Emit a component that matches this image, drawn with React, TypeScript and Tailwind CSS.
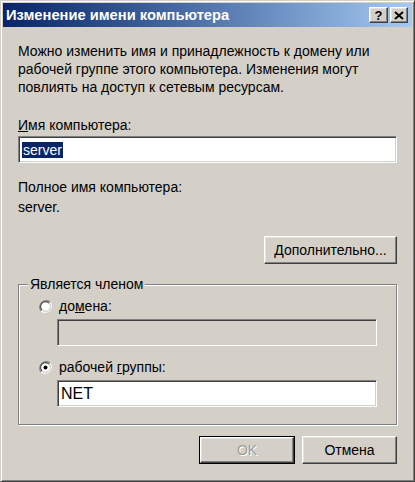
import React from 'react';

const font = { fontFamily: '"Liberation Sans", Arial, sans-serif' };

const Radio: React.FC<{ checked?: boolean }> = ({ checked }) => (
  <svg width="13" height="13" viewBox="0 0 12 12" className="shrink-0">
    <path d="M10.2 1.8 A6 6 0 0 0 1.8 10.2" fill="none" stroke="#808080" strokeWidth="1" />
    <path d="M1.8 10.2 A6 6 0 0 0 10.2 1.8" fill="none" stroke="#ffffff" strokeWidth="1" />
    <circle cx="6" cy="6" r="4.5" fill="#ffffff" />
    <path d="M9.2 2.8 A4.5 4.5 0 0 0 2.8 9.2" fill="none" stroke="#404040" strokeWidth="1" />
    <path d="M2.8 9.2 A4.5 4.5 0 0 0 9.2 2.8" fill="none" stroke="#d4d0c8" strokeWidth="1" />
    {checked && <circle cx="6" cy="6" r="1.8" fill="#000000" />}
  </svg>
);

const bevel =
  'border border-t-white border-l-white border-r-[#404040] border-b-[#404040] shadow-[inset_-1px_-1px_0_#808080,inset_1px_1px_0_#e4e2dc]';

const sunken =
  'border border-t-[#808080] border-l-[#808080] border-r-white border-b-white shadow-[inset_1px_1px_0_#404040,inset_-1px_-1px_0_#d4d0c8]';

export default function App() {
  return (
    <div
      style={font}
      className="w-[415px] h-[482px] bg-[#d4d0c8] text-black text-[14px] leading-[18px] border border-t-[#d4d0c8] border-l-[#d4d0c8] border-r-[#404040] border-b-[#404040] shadow-[inset_1px_1px_0_#ffffff,inset_-1px_-1px_0_#808080] p-[2px] flex flex-col overflow-hidden"
    >
      {/* Title bar */}
      <div className="h-[24px] flex items-center justify-between bg-gradient-to-r from-[#0a246a] to-[#a6caf0] pl-[3px] pr-[4px]">
        <span className="text-white font-bold text-[14.7px]">Изменение имени компьютера</span>
        <div className="flex gap-[2px]">
          <button className={`w-[19px] h-[16px] bg-[#d4d0c8] flex items-center justify-center ${bevel}`}>
            <span className="font-bold text-[13px] leading-none text-black">?</span>
          </button>
          <button className={`w-[18px] h-[16px] bg-[#d4d0c8] flex items-center justify-center ${bevel}`}>
            <svg width="10" height="9" viewBox="0 0 10 9">
              <path d="M1 1 L9 8 M9 1 L1 8" stroke="#000" strokeWidth="2" />
            </svg>
          </button>
        </div>
      </div>

      {/* Body */}
      <div className="flex flex-col px-[15px] pt-[15px]">
        <p>
          Можно изменить имя и принадлежность к домену или
          <br />
          рабочей группе этого компьютера. Изменения могут
          <br />
          повлиять на доступ к сетевым ресурсам.
        </p>

        <div className="mt-[20px]">
          <u>И</u>мя компьютера:
        </div>
        <div className={`mt-[2px] h-[27px] bg-white flex items-center px-[3px] ${sunken}`}>
          <span className="bg-[#0a246a] text-white leading-[16px] px-px">server</span>
        </div>

        <div className="mt-[15px]">Полное имя компьютера:</div>
        <div className="mt-[2px]">server.</div>

        <div className="mt-[20px] flex justify-end">
          <button className={`w-[133px] h-[28px] bg-[#d4d0c8] flex items-center justify-center ${bevel}`}>
            <span>
              <u>Д</u>ополнительно...
            </span>
          </button>
        </div>

        {/* Group box */}
        <fieldset className="mt-[11px] border border-[#808080] shadow-[inset_1px_1px_0_#ffffff,1px_1px_0_#ffffff] pb-[17px]">
          <legend className="ml-[9px] px-[2px] bg-[#d4d0c8]">Является членом</legend>

          <div className="mt-[4px] ml-[20px] flex items-center gap-[7px]">
            <Radio />
            <span>
              до<u>м</u>ена:
            </span>
          </div>
          <div className={`mt-[4px] ml-[38px] mr-[19px] h-[27px] bg-[#d4d0c8] ${sunken}`} />

          <div className="mt-[12px] ml-[20px] flex items-center gap-[7px]">
            <Radio checked />
            <span>
              рабочей <u>г</u>руппы:
            </span>
          </div>
          <div className={`mt-[4px] ml-[38px] mr-[19px] h-[27px] bg-white flex items-center px-[3px] text-[16px] ${sunken}`}>
            NET
          </div>
        </fieldset>

        {/* Dialog buttons */}
        <div className="mt-[11px] flex justify-end gap-[7px]">
          <button className="w-[96px] h-[28px] border border-black bg-[#d4d0c8]">
            <div className={`w-full h-full flex items-center justify-center ${bevel}`}>
              <span className="text-[#a09c94] [text-shadow:1px_1px_0_#ffffff]">OK</span>
            </div>
          </button>
          <button className={`w-[95px] h-[28px] bg-[#d4d0c8] flex items-center justify-center ${bevel}`}>
            Отмена
          </button>
        </div>
      </div>
    </div>
  );
}
